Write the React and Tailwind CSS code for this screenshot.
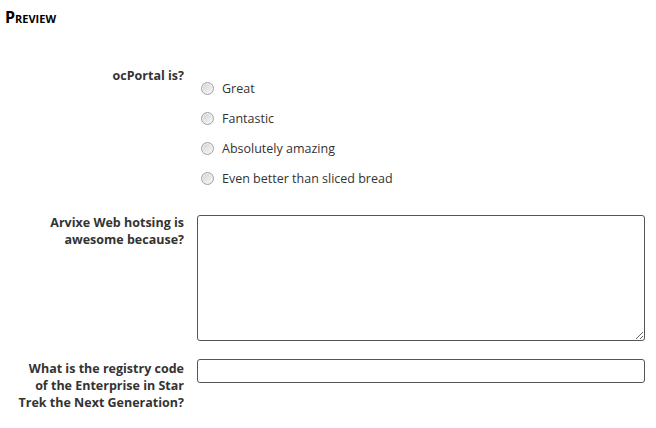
import React from "react";

function Radio({ label }) {
  return (
    <div className="flex h-[30px] items-center">
      <span className="ml-[4px] inline-block h-[13px] w-[13px] rounded-full border border-[#a2a2a2] bg-gradient-to-br from-[#cfcfcf] via-[#e6e6e6] to-[#fafafa] shadow-[inset_0_0_0_1px_#f0f0f0]" />
      <span className="ml-[8px] leading-[17px] text-[#333]">{label}</span>
    </div>
  );
}

export default function App() {
  return (
    <div className="h-[428px] w-[656px] bg-white font-['Open_Sans',sans-serif] text-[12.5px] text-[#333]">
      <h2 className="pl-[5px] pt-[7px] text-[16px] font-bold leading-[20px] text-black [font-variant:small-caps]">
        Preview
      </h2>
      <div className="mt-[40px] flex flex-col">
        <div className="flex gap-[13px]">
          <div className="w-[184px] text-right font-bold leading-[17px]">ocPortal is?</div>
          <div className="flex flex-col pt-[6px]">
            <Radio label="Great" />
            <Radio label="Fantastic" />
            <Radio label="Absolutely amazing" />
            <Radio label="Even better than sliced bread" />
          </div>
        </div>
        <div className="mt-[21px] flex gap-[13px]">
          <div className="w-[184px] text-right font-bold leading-[17px]">
            Arvixe Web hotsing is
            <br />
            awesome because?
          </div>
          <textarea className="mt-[1px] h-[126px] w-[448px] rounded-[3px] border border-[#555] bg-white" />
        </div>
        <div className="mt-[18px] flex gap-[13px]">
          <div className="w-[184px] pt-[1px] text-right font-bold leading-[17px]">
            What is the registry code
            <br />
            of the Enterprise in Star
            <br />
            Trek the Next Generation?
          </div>
          <input type="text" className="h-[24px] w-[448px] rounded-[3px] border border-[#555] bg-white" />
        </div>
      </div>
    </div>
  );
}
